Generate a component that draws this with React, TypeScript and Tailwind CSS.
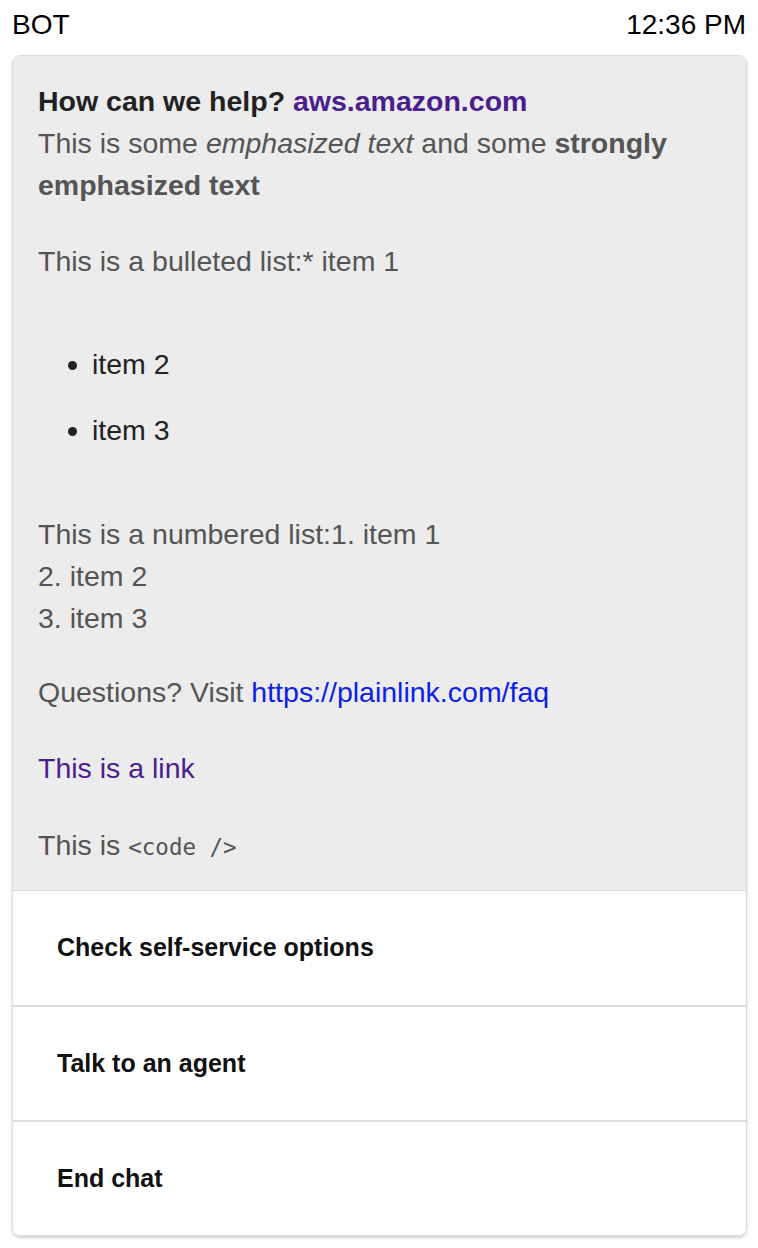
import React from 'react';

const options = ['Check self-service options', 'Talk to an agent', 'End chat'];

const App = () => {
  return (
    <div className="min-h-screen bg-white font-['Liberation_Sans',Arial,sans-serif]">
      <div className="flex justify-between items-center px-[12px] pt-[8px] text-[28px] leading-[34px] text-black">
        <span>BOT</span>
        <span>12:36 PM</span>
      </div>

      <div className="mx-[12px] mt-[13px] w-[735px] rounded-[8px] border border-[#dcdcdc] shadow-[0_2px_3px_rgba(0,0,0,0.18)] overflow-hidden">
        <div className="bg-[#ececec] px-[25px] pt-[24px] pb-[22px] text-[28.5px] leading-[42px] text-[#555]">
          <p>
            <strong className="text-[#222]">How can we help? </strong>
            <a className="font-bold text-[#4b1e8e]">aws.amazon.com</a>
            <br />
            This is some <em>emphasized text</em> and some <strong>strongly emphasized text</strong>
          </p>
          <p className="mt-[34px]">This is a bulleted list:* item 1</p>
          <ul className="mt-[61px] pl-[54px] list-disc text-[#222]">
            <li>item 2</li>
            <li className="mt-[24px]">item 3</li>
          </ul>
          <p className="mt-[62px]">
            This is a numbered list:1. item 1
            <br />
            2. item 2
            <br />
            3. item 3
          </p>
          <p className="mt-[32px]">
            Questions? Visit <a className="text-[#0b22e6]">https://plainlink.com/faq</a>
          </p>
          <p className="mt-[34px]">
            <a className="text-[#4b1e8e]">This is a link</a>
          </p>
          <p className="mt-[35px]">
            This is <code className="font-['DejaVu_Sans_Mono',monospace] text-[22.5px]">&lt;code /&gt;</code>
          </p>
        </div>

        <div className="bg-white">
          {options.map((label, i) => (
            <div
              key={label}
              className={`h-[115px] flex items-center pl-[44px] text-[25px] font-bold text-[#111] border-[#dcdcdc] ${i === 0 ? 'border-t' : 'border-t-2'}`}
            >
              {label}
            </div>
          ))}
        </div>
      </div>
    </div>
  );
};

export default App;
